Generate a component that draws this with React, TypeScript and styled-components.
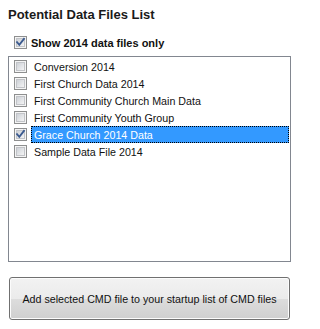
import React, { useState } from "react";
import styled, { createGlobalStyle } from "styled-components";

const Global = createGlobalStyle`
  html, body { margin: 0; padding: 0; background: #ffffff; }
  body { font-family: "Liberation Sans", Arial, sans-serif; }
`;

const Page = styled.div`
  width: 305px;
  height: 329px;
  box-sizing: border-box;
  padding: 7px 0 0 8px;
  display: flex;
  flex-direction: column;
`;

const Title = styled.div`
  font-size: 13px;
  font-weight: bold;
  line-height: 15px;
  color: #1a1a1a;
  height: 15px;
`;

const ShowRow = styled.label`
  display: flex;
  align-items: center;
  gap: 4px;
  margin: 14px 0 0 6px;
  height: 13px;
  font-size: 11px;
  font-weight: bold;
  color: #111;
`;

const ListBox = styled.div`
  margin-top: 7px;
  width: 283px;
  height: 206px;
  box-sizing: border-box;
  border: 1px solid #828790;
  padding: 1px 1px 0 5px;
  display: flex;
  flex-direction: column;
`;

const Row = styled.div`
  display: flex;
  align-items: center;
  height: 17px;
  gap: 4px;
`;

const ItemText = styled.span<{ $selected?: boolean }>`
  flex: 1;
  height: 17px;
  box-sizing: border-box;
  display: flex;
  align-items: center;
  padding-left: 2px;
  font-size: 10.7px;
  color: ${(p) => (p.$selected ? "#ffffff" : "#111111")};
  background: ${(p) => (p.$selected ? "#3399ff" : "transparent")};
  border: 1px dotted ${(p) => (p.$selected ? "#000000" : "transparent")};
`;

const Button = styled.button`
  margin: 15px 0 0 1px;
  width: 281px;
  height: 43px;
  box-sizing: border-box;
  border: 1px solid #707070;
  border-radius: 3px;
  background: linear-gradient(to bottom, #f2f2f2 0%, #ebebeb 50%, #dddddd 51%, #cfcfcf 100%);
  box-shadow: inset 0 0 0 1px #fcfcfc;
  font-family: "Liberation Sans", Arial, sans-serif;
  font-size: 10.7px;
  color: #111;
  padding: 0;
  cursor: pointer;
`;

const Box = styled.svg`
  flex: none;
  display: block;
`;

function CheckBox({ checked }: { checked: boolean }) {
  return (
    <Box width="13" height="13" viewBox="0 0 13 13">
      <defs>
        <linearGradient id={"cg"} x1="0" y1="0" x2="1" y2="1">
          <stop offset="0" stopColor="#cbcfd5" />
          <stop offset="1" stopColor="#f6f6f6" />
        </linearGradient>
      </defs>
      <rect x="0.5" y="0.5" width="12" height="12" fill="#f4f4f4" stroke="#8e8f8f" />
      <rect x="2.5" y="2.5" width="8" height="8" fill="url(#cg)" stroke="#c2c4c8" strokeWidth="1" />
      {checked && (
        <path
          d="M3 6.2 L5.3 8.8 L10 2.8"
          fill="none"
          stroke="#3b5a8f"
          strokeWidth="1.8"
          strokeLinecap="square"
        />
      )}
    </Box>
  );
}

const items = [
  "Conversion 2014",
  "First Church Data 2014",
  "First Community Church Main Data",
  "First Community Youth Group",
  "Grace Church 2014 Data",
  "Sample Data File 2014",
];

export default function App() {
  const [selected] = useState(4);
  return (
    <>
      <Global />
      <Page>
        <Title>Potential Data Files List</Title>
        <ShowRow>
          <CheckBox checked />
          Show 2014 data files only
        </ShowRow>
        <ListBox>
          {items.map((it, i) => (
            <Row key={it}>
              <CheckBox checked={i === selected} />
              <ItemText $selected={i === selected}>{it}</ItemText>
            </Row>
          ))}
        </ListBox>
        <Button>Add selected CMD file to your startup list of CMD files</Button>
      </Page>
    </>
  );
}
